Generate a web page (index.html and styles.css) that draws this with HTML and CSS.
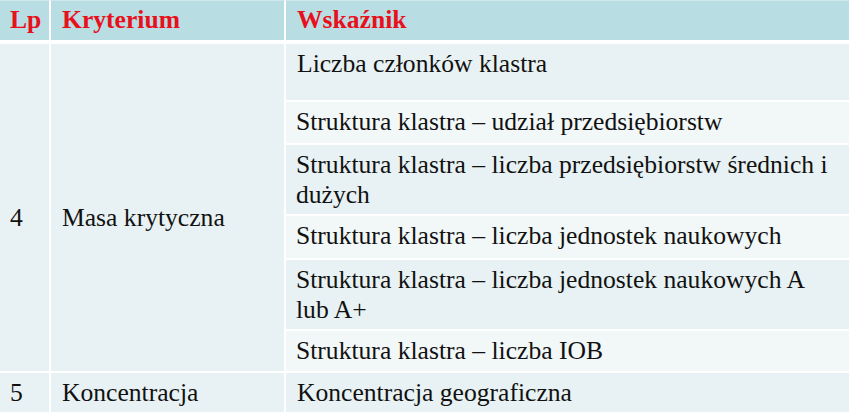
FILE: index.html
```html
<!DOCTYPE html>
<html lang="pl">
<head>
<meta charset="utf-8">
<title>Kryteria</title>
<link rel="stylesheet" href="styles.css">
</head>
<body>
<table class="tbl">
  <colgroup>
    <col class="c1"><col class="c2"><col class="c3">
  </colgroup>
  <thead>
    <tr class="hd">
      <th>Lp</th>
      <th>Kryterium</th>
      <th class="last">Wskaźnik</th>
    </tr>
  </thead>
  <tbody>
    <tr class="r1">
      <td class="mid dark" rowspan="6">4</td>
      <td class="mid dark" rowspan="6">Masa krytyczna</td>
      <td class="last dark">Liczba członków klastra</td>
    </tr>
    <tr class="r2"><td class="last light">Struktura klastra – udział przedsiębiorstw</td></tr>
    <tr class="r3"><td class="last dark">Struktura klastra – liczba przedsiębiorstw średnich i dużych</td></tr>
    <tr class="r4"><td class="last light">Struktura klastra – liczba jednostek naukowych</td></tr>
    <tr class="r5"><td class="last dark">Struktura klastra – liczba jednostek naukowych A lub A+</td></tr>
    <tr class="r6"><td class="last light">Struktura klastra – liczba IOB</td></tr>
    <tr class="r7">
      <td class="dark">5</td>
      <td class="dark">Koncentracja</td>
      <td class="last dark">Koncentracja geograficzna</td>
    </tr>
  </tbody>
</table>
</body>
</html>
```
FILE: styles.css
```css
html, body {
  margin: 0;
  padding: 0;
  background: #ffffff;
}
body {
  width: 849px;
  height: 412px;
  overflow: hidden;
  font-family: "Liberation Serif", "Times New Roman", serif;
  color: #111111;
}
.tbl {
  width: 849px;
  border-collapse: separate;
  border-spacing: 0;
  table-layout: fixed;
  font-family: "Liberation Serif", "Times New Roman", serif;
  font-size: 25.6px;
  line-height: 30px;
}
.c1 { width: 51px; }
.c2 { width: 235px; }
.c3 { width: 563px; }
.tbl th, .tbl td {
  font-family: "Liberation Serif", "Times New Roman", serif;
  font-size: 25.6px;
  font-weight: normal;
  padding: 5px 12px 0 11px;
  text-align: left;
  vertical-align: top;
  border-right: 2px solid #ffffff;
  border-bottom: 2px solid #ffffff;
  box-sizing: border-box;
}
.tbl th:first-child, .tbl td:first-child { padding-left: 10px; padding-right: 4px; }
.tbl th.last, .tbl td.last {
  border-right: 0;
  padding-right: 17px;
}
.tbl th {
  background: #b8dde3;
  color: #e8101c;
  font-weight: bold;
  height: 44px;
  padding-top: 4px;
  border-bottom: 4px solid #ffffff;
  border-top: 1px solid #cfe8ec;
}
.tbl td.dark { background: #e8f1f3; }
.tbl td.light { background: #f2f7f8; }
.tbl td.mid {
  vertical-align: middle;
  padding-top: 21px;
}
.r1 { height: 58px; }
.r2 { height: 43px; }
.r3 { height: 71px; }
.r4 { height: 44px; }
.r5 { height: 71px; }
.r6 { height: 42px; }
.r7 { height: 44px; }
```
